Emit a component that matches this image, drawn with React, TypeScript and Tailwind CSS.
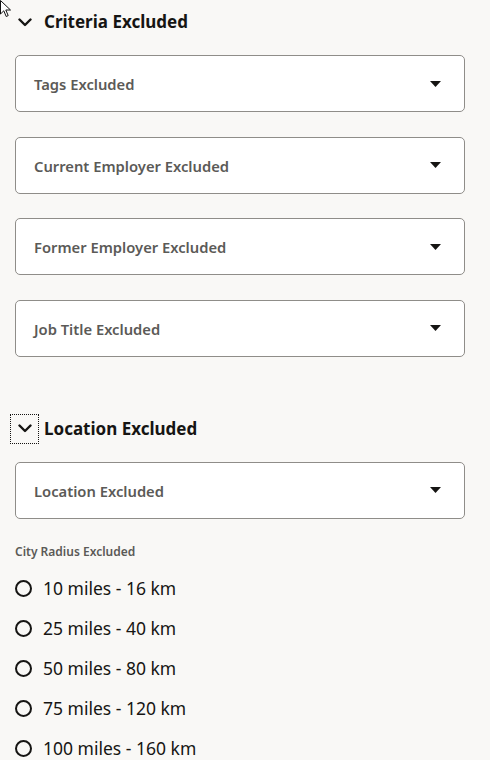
import React, { useState } from 'react';

const fields = ['Tags Excluded', 'Current Employer Excluded', 'Former Employer Excluded', 'Job Title Excluded'];
const radii = ['10 miles - 16 km', '25 miles - 40 km', '50 miles - 80 km', '75 miles - 120 km', '100 miles - 160 km'];

const Chevron = () => (
  <svg width="14" height="9" viewBox="0 0 14 9" fill="none">
    <path d="M1.5 1.5 L7 7 L12.5 1.5" stroke="#161513" strokeWidth="2.4" strokeLinecap="round" strokeLinejoin="round" />
  </svg>
);

const Caret = () => (
  <svg width="11" height="6" viewBox="0 0 11 6">
    <path d="M0 0 H11 L5.5 6 Z" fill="#161513" />
  </svg>
);

const SelectField: React.FC<{ label: string }> = ({ label }) => (
  <div className="h-[57px] bg-white border border-[#8f8d89] rounded-[5px] flex items-center justify-between pl-[18px] pr-[23px]">
    <span className="text-[14.75px] font-semibold text-[#5b5a57] mt-[2px]">{label}</span>
    <Caret />
  </div>
);

const SectionHeader: React.FC<{ title: string; focused?: boolean }> = ({ title, focused }) => (
  <div className="flex items-center gap-[6px] -ml-[4px]">
    <button
      className={`w-[27px] h-[28px] flex items-center justify-center ${focused ? 'outline outline-1 outline-dotted outline-[#161513]' : ''}`}
    >
      <Chevron />
    </button>
    <h2 className="text-[17px] font-bold text-[#161513]">{title}</h2>
  </div>
);

export default function App() {
  const [radius, setRadius] = useState<string | null>(null);

  return (
    <div className="relative min-h-[760px] bg-[#f9f8f6] pl-[15px] pr-[25px] pt-[8px] pb-4 overflow-hidden" style={{ fontFamily: '"Noto Sans", Lato, sans-serif' }}>
      {/* mouse cursor */}
      <svg className="absolute left-0 top-0" width="12" height="18" viewBox="0 0 12 18">
        <path d="M0.5 0.5 L0.5 14 L3.8 10.8 L6.2 16.5 L8.2 15.6 L5.8 10 L10.5 10 Z" fill="#fff" stroke="#111" strokeWidth="1" />
      </svg>

      {/* Criteria Excluded */}
      <SectionHeader title="Criteria Excluded" />
      <div className="mt-[19px] flex flex-col gap-[24.5px]">
        {fields.map((f) => (
          <SelectField key={f} label={f} />
        ))}
      </div>

      {/* Location Excluded */}
      <div className="mt-[58px]">
        <SectionHeader title="Location Excluded" focused />
      </div>
      <div className="mt-[19px]">
        <SelectField label="Location Excluded" />
      </div>

      <div className="mt-[24px] text-[12px] font-semibold text-[#5b5a57]">City Radius Excluded</div>
      <div className="mt-[8px] flex flex-col">
        {radii.map((r) => (
          <label key={r} className="h-[40px] flex items-center gap-[11px] cursor-pointer" onClick={() => setRadius(r)}>
            <span className="w-[17px] h-[17px] rounded-full border-2 border-[#161513] flex items-center justify-center">
              {radius === r && <span className="w-[7px] h-[7px] rounded-full bg-[#161513]" />}
            </span>
            <span className="text-[17.5px] text-[#161513]">{r}</span>
          </label>
        ))}
      </div>
    </div>
  );
}
